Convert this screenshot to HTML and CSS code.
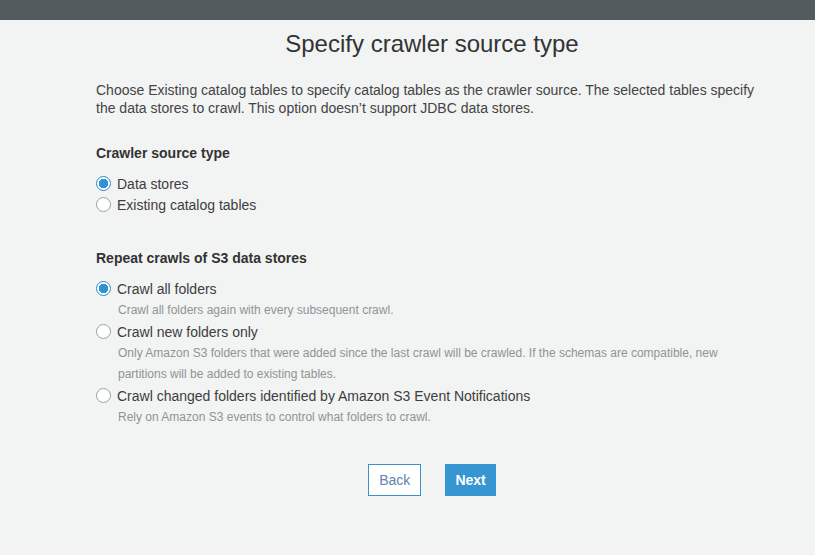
FILE: index.html
```html
<!DOCTYPE html>
<html>
<head>
<meta charset="utf-8">
<link rel="stylesheet" href="styles.css">
</head>
<body>
<div class="topbar"></div>
<main class="page">
  <h1 class="title">Specify crawler source type</h1>
  <p class="intro">Choose Existing catalog tables to specify catalog tables as the crawler source. The selected tables specify the data stores to crawl. This option doesn’t support JDBC data stores.</p>

  <section class="group first">
    <h2 class="group-title">Crawler source type</h2>
    <label class="option"><input type="radio" name="src" checked><span>Data stores</span></label>
    <label class="option"><input type="radio" name="src"><span>Existing catalog tables</span></label>
  </section>

  <section class="group second">
    <h2 class="group-title">Repeat crawls of S3 data stores</h2>
    <label class="option"><input type="radio" name="rep" checked><span>Crawl all folders</span></label>
    <p class="desc">Crawl all folders again with every subsequent crawl.</p>
    <label class="option"><input type="radio" name="rep"><span>Crawl new folders only</span></label>
    <p class="desc">Only Amazon S3 folders that were added since the last crawl will be crawled. If the schemas are compatible, new partitions will be added to existing tables.</p>
    <label class="option"><input type="radio" name="rep"><span>Crawl changed folders identified by Amazon S3 Event Notifications</span></label>
    <p class="desc">Rely on Amazon S3 events to control what folders to crawl.</p>
  </section>

  <div class="actions">
    <button class="btn btn-back">Back</button>
    <button class="btn btn-next">Next</button>
  </div>
</main>
</body>
</html>
```
FILE: styles.css
```css
html, body {
  margin: 0;
  padding: 0;
}
body {
  background: #f2f3f3;
  font-family: "Liberation Sans", Arial, sans-serif;
  color: #444;
  width: 815px;
  height: 555px;
  overflow: hidden;
}
.topbar {
  height: 20px;
  background: #545b5e;
}
.page {
  width: 672px;
  margin-left: 96px;
  display: flex;
  flex-direction: column;
}
.title {
  margin: 10px 0 0;
  font-size: 24px;
  line-height: 28px;
  font-weight: normal;
  color: #333;
  text-align: center;
}
.intro {
  margin: 23px 0 0;
  font-size: 14px;
  line-height: 18px;
  color: #444;
  padding-right: 6px;
}
.group {
  display: flex;
  flex-direction: column;
}
.group.first {
  margin-top: 27px;
}
.group.second {
  margin-top: 34px;
}
.group-title {
  margin: 0 0 11px;
  font-size: 14px;
  line-height: 18px;
  font-weight: bold;
  color: #333;
}
.option {
  display: flex;
  align-items: center;
  gap: 6px;
  height: 21px;
  font-size: 14px;
  color: #3d3d3d;
}
.option input {
  -webkit-appearance: none;
  appearance: none;
  margin: 0;
  width: 15px;
  height: 15px;
  border: 1px solid #9aa0a3;
  border-radius: 50%;
  background: #fff;
  box-sizing: border-box;
}
.option input:checked {
  border-color: #2f8ccb;
  background: radial-gradient(circle, #2f92d4 0 4.5px, #fff 5px);
}
.desc {
  margin: 1px 0 0;
  padding-left: 22px;
  font-size: 12px;
  line-height: 21px;
  color: #8d9596;
}
.actions {
  margin-top: 36px;
  display: flex;
  justify-content: center;
  gap: 24px;
}
.btn {
  font-family: "Liberation Sans", Arial, sans-serif;
  font-size: 14px;
  height: 32px;
  box-sizing: border-box;
  cursor: pointer;
}
.btn-back {
  padding: 0 10px;
  background: #fff;
  border: 1px solid #3f92c9;
  color: #5f84ac;
}
.btn-next {
  padding: 0 9px;
  background: #3696d1;
  border: 1px solid #3696d1;
  color: #fff;
  font-weight: bold;
}
```
